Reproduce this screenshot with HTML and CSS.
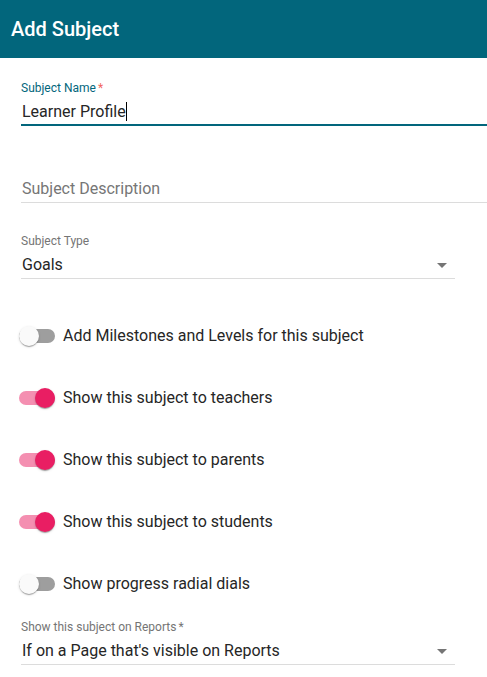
FILE: index.html
```html
<!DOCTYPE html>
<html lang="en">
<head>
  <meta charset="UTF-8">
  <title>Add Subject</title>
  <link rel="stylesheet" href="styles.css">
</head>
<body>

<div class="dialog-title">Add Subject</div>

<div class="form">
  <div class="field field-focused">
    <label class="field-label">Subject Name<span class="req">*</span></label>
    <div class="field-input">Learner Profile<span class="caret"></span></div>
  </div>

  <div class="field field-plain">
    <div class="field-input placeholder">Subject Description</div>
  </div>

  <div class="field field-select">
    <label class="field-label">Subject Type</label>
    <div class="field-input">
      <span>Goals</span>
      <span class="arrow"></span>
    </div>
  </div>

  <div class="toggles">
    <div class="toggle-row">
      <span class="toggle"><span class="knob"></span></span>
      <span class="toggle-text">Add Milestones and Levels for this subject</span>
    </div>
    <div class="toggle-row">
      <span class="toggle on"><span class="knob"></span></span>
      <span class="toggle-text">Show this subject to teachers</span>
    </div>
    <div class="toggle-row">
      <span class="toggle on"><span class="knob"></span></span>
      <span class="toggle-text">Show this subject to parents</span>
    </div>
    <div class="toggle-row">
      <span class="toggle on"><span class="knob"></span></span>
      <span class="toggle-text">Show this subject to students</span>
    </div>
    <div class="toggle-row">
      <span class="toggle"><span class="knob"></span></span>
      <span class="toggle-text">Show progress radial dials</span>
    </div>
  </div>

  <div class="field field-select field-reports">
    <label class="field-label">Show this subject on Reports<span class="req grey">*</span></label>
    <div class="field-input">
      <span>If on a Page that's visible on Reports</span>
      <span class="arrow"></span>
    </div>
  </div>
</div>

</body>
</html>
```

FILE: styles.css
```css
body {
  font-family: Roboto, "Noto Sans", Arial, sans-serif;
  background: #fff;
  margin: 0;
  color: #262626;
  overflow: hidden;
}

.dialog-title {
  height: 58px;
  line-height: 58px;
  padding-left: 11px;
  background: #02667c;
  color: #fff;
  font-size: 20px;
  font-weight: 500;
}

.form {
  padding: 22px 0 0 21px;
}

.field-label {
  display: block;
  font-size: 12px;
  line-height: 16px;
  color: #757575;
}

.req {
  color: #f2675f;
  margin-left: 2px;
}

.req.grey {
  color: #757575;
}

.field-input {
  font-size: 16px;
  line-height: 20px;
  padding-left: 1px;
  border-bottom: 1px solid #dcdcdc;
}

.field-focused .field-label {
  color: #02667c;
}

.field-focused .field-input {
  margin-top: 6px;
  padding-bottom: 2px;
  border-bottom: 2px solid #02667c;
}

.caret {
  display: inline-block;
  width: 1px;
  height: 19px;
  background: #000;
  vertical-align: -4px;
}

.field-plain {
  padding-top: 53px;
}

.field-plain .field-input {
  padding-bottom: 3px;
}

.placeholder {
  color: #767676;
}

.field-select {
  width: 434px;
  margin-top: 30px;
}

.field-select .field-input {
  margin-top: 6px;
  padding-bottom: 3px;
  display: flex;
  justify-content: space-between;
  align-items: center;
}

.arrow {
  width: 0;
  height: 0;
  border-left: 5px solid transparent;
  border-right: 5px solid transparent;
  border-top: 5px solid #757575;
  margin-right: 8px;
}

.toggles {
  margin-top: 47px;
  display: flex;
  flex-direction: column;
  gap: 42px;
}

.toggle-row {
  display: flex;
  align-items: center;
  height: 20px;
}

.toggle {
  position: relative;
  width: 36px;
  height: 14px;
  margin-left: -2px;
  border-radius: 7px;
  background: #9e9e9e;
}

.toggle .knob {
  position: absolute;
  top: -3px;
  left: 0;
  width: 20px;
  height: 20px;
  border-radius: 50%;
  background: #fafafa;
  box-shadow: 0 2px 1px -1px rgba(0,0,0,0.2), 0 1px 1px 0 rgba(0,0,0,0.14), 0 1px 3px 0 rgba(0,0,0,0.12);
}

.toggle.on {
  background: #f48fb1;
}

.toggle.on .knob {
  left: 16px;
  background: #e91e63;
}

.toggle-text {
  margin-left: 8px;
  font-size: 16px;
  line-height: 20px;
}

.field-reports {
  margin-top: 25px;
}
```
